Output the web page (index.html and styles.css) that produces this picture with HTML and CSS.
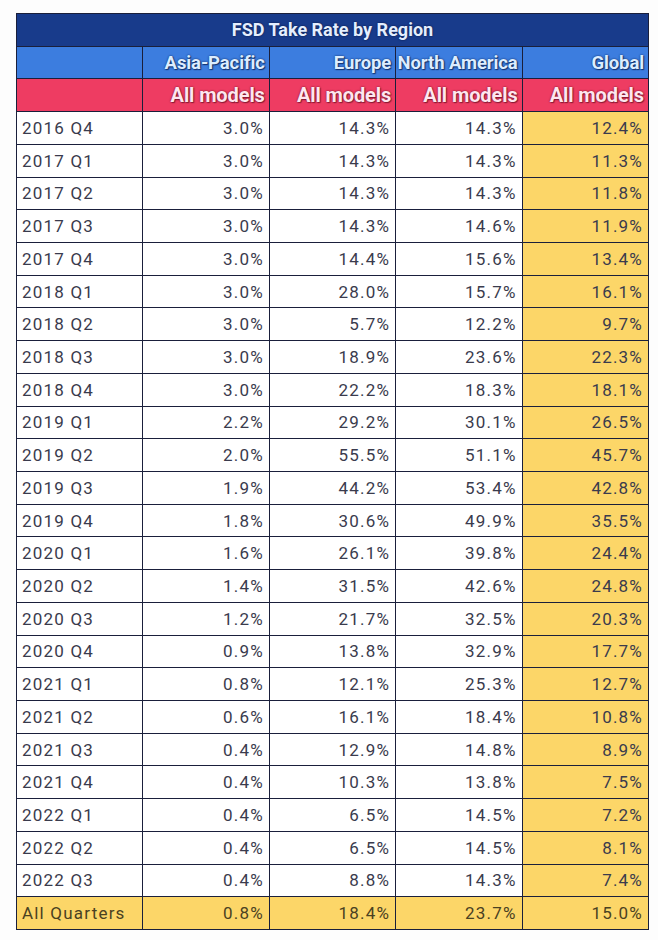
FILE: index.html
```html
<!DOCTYPE html>
<html lang="en">
<head>
<meta charset="utf-8">
<title>FSD Take Rate by Region</title>
<link rel="stylesheet" href="styles.css">
</head>
<body>
<div class="sheet">
  <div class="grid">
    <div class="title">FSD Take Rate by Region</div>

    <div class="hd region"></div>
    <div class="hd region">Asia-Pacific</div>
    <div class="hd region">Europe</div>
    <div class="hd region">North America</div>
    <div class="hd region">Global</div>

    <div class="hd model"></div>
    <div class="hd model">All models</div>
    <div class="hd model">All models</div>
    <div class="hd model">All models</div>
    <div class="hd model">All models</div>

    <div class="c q">2016 Q4</div><div class="c">3.0%</div><div class="c">14.3%</div><div class="c">14.3%</div><div class="c g">12.4%</div>
    <div class="c q">2017 Q1</div><div class="c">3.0%</div><div class="c">14.3%</div><div class="c">14.3%</div><div class="c g">11.3%</div>
    <div class="c q">2017 Q2</div><div class="c">3.0%</div><div class="c">14.3%</div><div class="c">14.3%</div><div class="c g">11.8%</div>
    <div class="c q">2017 Q3</div><div class="c">3.0%</div><div class="c">14.3%</div><div class="c">14.6%</div><div class="c g">11.9%</div>
    <div class="c q">2017 Q4</div><div class="c">3.0%</div><div class="c">14.4%</div><div class="c">15.6%</div><div class="c g">13.4%</div>
    <div class="c q">2018 Q1</div><div class="c">3.0%</div><div class="c">28.0%</div><div class="c">15.7%</div><div class="c g">16.1%</div>
    <div class="c q">2018 Q2</div><div class="c">3.0%</div><div class="c">5.7%</div><div class="c">12.2%</div><div class="c g">9.7%</div>
    <div class="c q">2018 Q3</div><div class="c">3.0%</div><div class="c">18.9%</div><div class="c">23.6%</div><div class="c g">22.3%</div>
    <div class="c q">2018 Q4</div><div class="c">3.0%</div><div class="c">22.2%</div><div class="c">18.3%</div><div class="c g">18.1%</div>
    <div class="c q">2019 Q1</div><div class="c">2.2%</div><div class="c">29.2%</div><div class="c">30.1%</div><div class="c g">26.5%</div>
    <div class="c q">2019 Q2</div><div class="c">2.0%</div><div class="c">55.5%</div><div class="c">51.1%</div><div class="c g">45.7%</div>
    <div class="c q">2019 Q3</div><div class="c">1.9%</div><div class="c">44.2%</div><div class="c">53.4%</div><div class="c g">42.8%</div>
    <div class="c q">2019 Q4</div><div class="c">1.8%</div><div class="c">30.6%</div><div class="c">49.9%</div><div class="c g">35.5%</div>
    <div class="c q">2020 Q1</div><div class="c">1.6%</div><div class="c">26.1%</div><div class="c">39.8%</div><div class="c g">24.4%</div>
    <div class="c q">2020 Q2</div><div class="c">1.4%</div><div class="c">31.5%</div><div class="c">42.6%</div><div class="c g">24.8%</div>
    <div class="c q">2020 Q3</div><div class="c">1.2%</div><div class="c">21.7%</div><div class="c">32.5%</div><div class="c g">20.3%</div>
    <div class="c q">2020 Q4</div><div class="c">0.9%</div><div class="c">13.8%</div><div class="c">32.9%</div><div class="c g">17.7%</div>
    <div class="c q">2021 Q1</div><div class="c">0.8%</div><div class="c">12.1%</div><div class="c">25.3%</div><div class="c g">12.7%</div>
    <div class="c q">2021 Q2</div><div class="c">0.6%</div><div class="c">16.1%</div><div class="c">18.4%</div><div class="c g">10.8%</div>
    <div class="c q">2021 Q3</div><div class="c">0.4%</div><div class="c">12.9%</div><div class="c">14.8%</div><div class="c g">8.9%</div>
    <div class="c q">2021 Q4</div><div class="c">0.4%</div><div class="c">10.3%</div><div class="c">13.8%</div><div class="c g">7.5%</div>
    <div class="c q">2022 Q1</div><div class="c">0.4%</div><div class="c">6.5%</div><div class="c">14.5%</div><div class="c g">7.2%</div>
    <div class="c q">2022 Q2</div><div class="c">0.4%</div><div class="c">6.5%</div><div class="c">14.5%</div><div class="c g">8.1%</div>
    <div class="c q">2022 Q3</div><div class="c">0.4%</div><div class="c">8.8%</div><div class="c">14.3%</div><div class="c g">7.4%</div>
    <div class="c q t">All Quarters</div><div class="c t">0.8%</div><div class="c t">18.4%</div><div class="c t">23.7%</div><div class="c t">15.0%</div>
  </div>
</div>
</body>
</html>
```

FILE: styles.css
```css
html, body {
  margin: 0;
  padding: 0;
  background: #fdfdfd;
}
.sheet {
  padding: 13px 0 0 16px;
}
.grid {
  box-sizing: border-box;
  width: 633px;
  height: 917px;
  display: grid;
  grid-template-columns: repeat(5, 1fr);
  grid-template-rows: repeat(28, 1fr);
  gap: 1px;
  padding: 1px;
  background: #1a1f3b;
  font-family: Roboto, "Liberation Sans", sans-serif;
}
.title {
  grid-column: 1 / -1;
  background: #183b8b;
  color: #e4eeff;
  font-weight: 700;
  font-size: 18px;
  display: flex;
  align-items: center;
  justify-content: center;
  text-shadow: 0 0 2px rgba(5, 15, 50, 0.9);
}
.hd {
  font-weight: 700;
  font-size: 18.5px;
  letter-spacing: -0.1px;
  display: flex;
  align-items: center;
  justify-content: flex-end;
  padding-right: 4px;
  white-space: nowrap;
  overflow: hidden;
}
.region {
  background: #3c7ddf;
  color: #dcedff;
  text-shadow: 0 0 2px rgba(10, 30, 80, 0.95), 1px 1px 1px rgba(10, 30, 80, 0.7);
}
.model {
  background: #ee3c62;
  color: #ffe6ef;
  font-size: 20px;
  text-shadow: 0 0 2px rgba(90, 10, 30, 0.9), 1px 1px 1px rgba(90, 10, 30, 0.6);
}
.c {
  background: #ffffff;
  color: #3a3b4d;
  font-size: 17px;
  letter-spacing: 1.2px;
  display: flex;
  align-items: center;
  justify-content: flex-end;
  padding-right: 5px;
  white-space: nowrap;
}
.c.q {
  justify-content: flex-start;
  padding-right: 0;
  padding-left: 5px;
}
.c.g {
  background: #fcd668;
}
.c.t {
  background: #fcd668;
  color: #4a4122;
}
```
